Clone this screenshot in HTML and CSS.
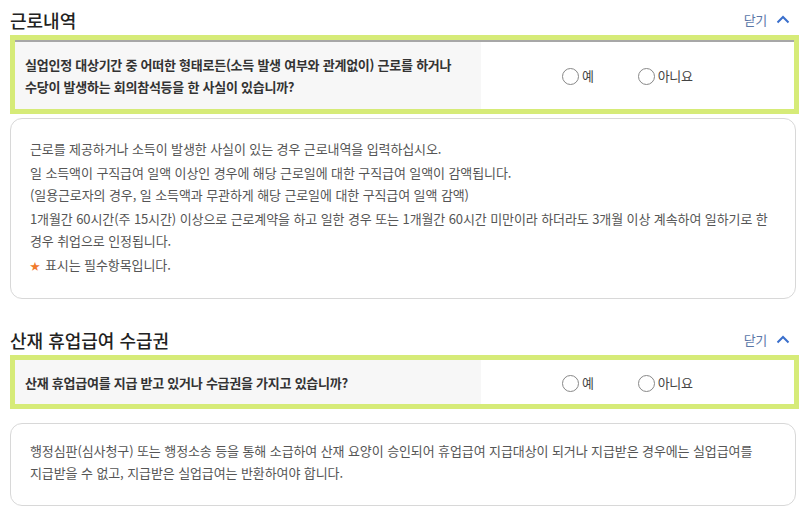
FILE: index.html
```html
<!DOCTYPE html>
<html lang="ko">
<head>
    <meta charset="UTF-8">
    <meta name="viewport" content="width=device-width, initial-scale=1.0">
    <title>근로내역</title>
    <link rel="stylesheet" href="styles.css">
</head>
<body>
    <div class="page">
        <section class="block">
            <div class="block-head">
                <h2>근로내역</h2>
                <button class="fold">닫기
                    <svg width="14" height="9" viewBox="0 0 14 9"><polyline points="1.5,7.5 7,2 12.5,7.5" fill="none" stroke="#3a6fcc" stroke-width="2"/></svg>
                </button>
            </div>
            <div class="ask ask-lined">
                <div class="ask-q">실업인정 대상기간 중 어떠한 형태로든(소득 발생 여부와 관계없이) 근로를 하거나<br>수당이 발생하는 회의참석등을 한 사실이 있습니까?</div>
                <div class="ask-a">
                    <label class="radio"><span class="dot"></span>예</label>
                    <label class="radio"><span class="dot"></span>아니요</label>
                </div>
            </div>
            <div class="note">
                <p>근로를 제공하거나 소득이 발생한 사실이 있는 경우 근로내역을 입력하십시오.</p>
                <p>일 소득액이 구직급여 일액 이상인 경우에 해당 근로일에 대한 구직급여 일액이 감액됩니다.<br>(일용근로자의 경우, 일 소득액과 무관하게 해당 근로일에 대한 구직급여 일액 감액)</p>
                <p>1개월간 60시간(주 15시간) 이상으로 근로계약을 하고 일한 경우 또는 1개월간 60시간 미만이라 하더라도 3개월 이상 계속하여 일하기로 한<br>경우 취업으로 인정됩니다.</p>
                <p><span class="star">★</span>표시는 필수항목입니다.</p>
            </div>
        </section>

        <section class="block">
            <div class="block-head">
                <h2>산재 휴업급여 수급권</h2>
                <button class="fold">닫기
                    <svg width="14" height="9" viewBox="0 0 14 9"><polyline points="1.5,7.5 7,2 12.5,7.5" fill="none" stroke="#3a6fcc" stroke-width="2"/></svg>
                </button>
            </div>
            <div class="ask">
                <div class="ask-q">산재 휴업급여를 지급 받고 있거나 수급권을 가지고 있습니까?</div>
                <div class="ask-a">
                    <label class="radio"><span class="dot"></span>예</label>
                    <label class="radio"><span class="dot"></span>아니요</label>
                </div>
            </div>
            <div class="note note-wide">
                <p>행정심판(심사청구) 또는 행정소송 등을 통해 소급하여 산재 요양이 승인되어 휴업급여 지급대상이 되거나 지급받은 경우에는 실업급여를<br>지급받을 수 없고, 지급받은 실업급여는 반환하여야 합니다.</p>
            </div>
        </section>
    </div>
</body>
</html>
```

FILE: styles.css
```css
body {
    margin: 0;
    background-color: #fff;
    font-family: "Noto Sans CJK KR", "Noto Sans", sans-serif;
    color: #333;
}
.page {
    width: 786px;
    padding: 4px 0 0 10px;
}
.block + .block {
    margin-top: 25px;
}
.block-head {
    display: flex;
    justify-content: space-between;
    align-items: center;
    height: 31px;
}
.block-head h2 {
    margin: 0;
    font-size: 18px;
    font-weight: 500;
    color: #222;
}
.fold {
    display: flex;
    align-items: center;
    gap: 9px;
    margin-right: 6px;
    padding: 0;
    border: none;
    background: none;
    font-family: inherit;
    font-size: 13px;
    letter-spacing: -0.3px;
    color: #5b77a8;
    cursor: pointer;
}

.ask {
    display: flex;
    margin-right: -3px;
    border: 5px solid #d6eb78;
}
.ask-lined {
    border-top-width: 0;
    padding-top: 7px;
    background: linear-gradient(#d6eb78 0 5px, #a7a7a7 5px 7px, transparent 7px);
}
.ask-q {
    width: 446px;
    padding: 12px 10px 10px;
    background-color: #f7f7f7;
    font-size: 13px;
    font-weight: bold;
    line-height: 22px;
    letter-spacing: -0.25px;
    color: #333;
}
.ask-lined .ask-q {
    padding-bottom: 11px;
}
.ask-a {
    flex: 1;
    display: flex;
    align-items: center;
    gap: 44px;
    padding-left: 81px;
    background-color: #fff;
}
.radio {
    display: flex;
    align-items: center;
    gap: 3px;
    font-size: 13px;
    letter-spacing: -0.3px;
    color: #444;
    cursor: pointer;
}
.radio .dot {
    width: 15px;
    height: 15px;
    border: 1px solid #888;
    border-radius: 50%;
    margin-top: 2px;
}

.note {
    margin-top: 4px;
    padding: 19px 19px 21px;
    border: 1px solid #d8d8d8;
    border-radius: 12px;
}
.note-wide {
    margin-top: 14px;
    padding: 16px 19px 21px;
}
.note p {
    margin: 0;
    font-size: 13px;
    line-height: 22px;
    letter-spacing: -0.1px;
    color: #555;
}
.note p + p {
    margin-top: 2px;
}
.star {
    display: inline-block;
    width: 15px;
    font-size: 10px;
    color: #f07a2c;
}
```
